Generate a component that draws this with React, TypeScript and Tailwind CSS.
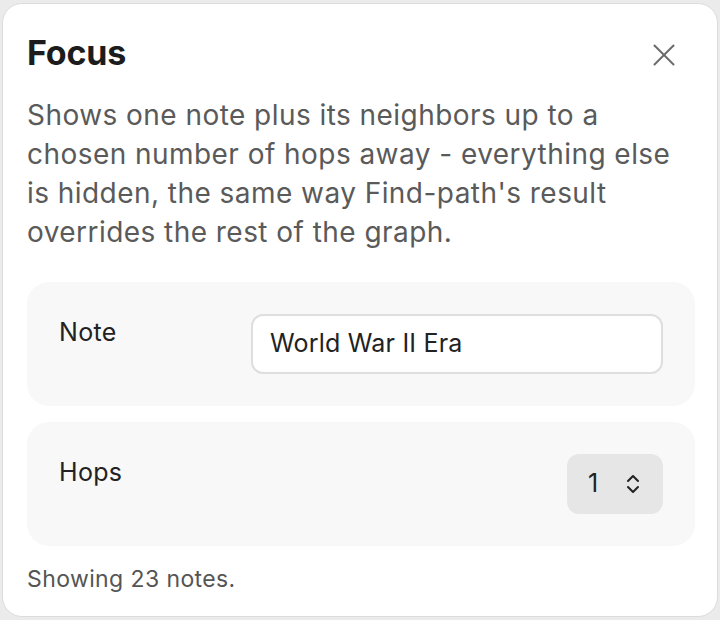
import React from "react";

export default function App() {
  return (
    <div
      className="w-[720px] h-[620px] bg-[#ebebeb] pt-[3px] pl-[2px] pr-[2px] pb-[3px]"
      style={{ fontFamily: "Inter, 'Noto Sans', sans-serif" }}
    >
      <div className="h-full w-full bg-white rounded-[20px] border border-[#dcdcdc] pl-6 pr-[22px] pt-[26px] flex flex-col">
        <div className="flex items-center justify-between">
          <h1 className="text-[34px] leading-[46px] font-bold text-[#1c1c1c] tracking-[-0.2px]">Focus</h1>
          <button className="w-[36px] h-[36px] flex items-center justify-center mr-[13px] mt-[4px] text-[#6b6b6b]">
            <svg width="22" height="22" viewBox="0 0 22 22" fill="none" stroke="currentColor" strokeWidth="2" strokeLinecap="round">
              <path d="M1.5 1.5 L20.5 20.5" />
              <path d="M20.5 1.5 L1.5 20.5" />
            </svg>
          </button>
        </div>
        <p className="mt-[20px] text-[28px] leading-[39px] text-[#5a5a5a] tracking-[0.45px]">
          Shows one note plus its neighbors up to a<br />
          chosen number of hops away - everything else<br />
          is hidden, the same way Find-path's result<br />
          overrides the rest of the graph.
        </p>
        <div className="mt-[30px] flex flex-col gap-4">
          <div className="bg-[#f8f8f8] rounded-[22px] px-8 py-8 flex items-start justify-between">
            <span className="text-[25px] leading-[36px] text-[#222] tracking-[0.3px]">Note</span>
            <div className="w-[412px] h-[60px] bg-white border-2 border-[#dedede] rounded-[12px] flex items-center px-[17px] text-[25px] text-[#222] tracking-[0.2px]">
              World War II Era
            </div>
          </div>
          <div className="bg-[#f8f8f8] rounded-[22px] px-8 py-8 flex items-start justify-between">
            <span className="text-[25px] leading-[36px] text-[#222] tracking-[0.3px]">Hops</span>
            <div className="w-[96px] h-[60px] bg-[#e6e6e6] rounded-[12px] flex items-center pl-[21px] pr-[22px] justify-between text-[25px] text-[#222]">
              <span>1</span>
              <svg width="16" height="22" viewBox="0 0 16 22" fill="none" stroke="#222" strokeWidth="2" strokeLinecap="round" strokeLinejoin="round">
                <path d="M3 8 L8 3 L13 8" />
                <path d="M3 14 L8 19 L13 14" />
              </svg>
            </div>
          </div>
        </div>
        <p className="mt-[18px] text-[23px] leading-[30px] text-[#555] tracking-[0.4px]">Showing 23 notes.</p>
      </div>
    </div>
  );
}
